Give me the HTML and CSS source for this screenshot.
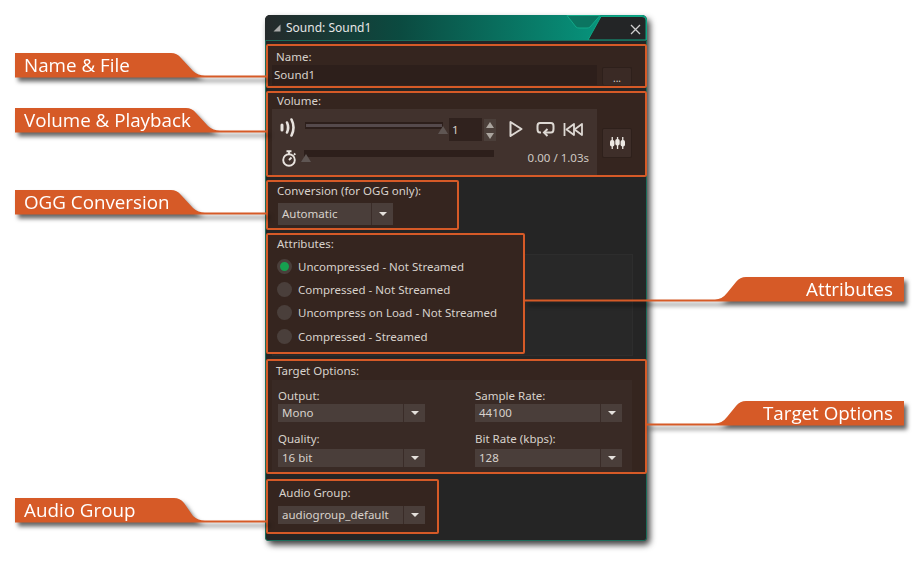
FILE: index.html
```html
<!DOCTYPE html>
<html>
<head>
    <title>Sound Editor</title>
    <link rel="stylesheet" href="styles.css">
</head>
<body>
<div class="stage">
    <div class="window">
        <div class="titlebar">
            <svg class="collapse" width="8" height="8" viewBox="0 0 8 8"><path d="M7.500 .5V7.500H.5Z" fill="#a9a9a9"/></svg>
            <span class="title">Sound: Sound1</span>
            <svg class="notch" width="83" height="25" viewBox="0 0 83 25">
                <path d="M3 .5H36L26 12Q25 13 23 13H15Q13 13 12 12Z" fill="#0b7561" stroke="#12a888"/>
                <path d="M37 1.500H78Q82 1.500 82 5V25H24Z" fill="#232526" stroke="#10a583"/>
                <path d="M67 10L76 19M76 10L67 19" stroke="#cfcfcf" stroke-width="1.300" fill="none"/>
            </svg>
        </div>
        <div class="content">
            <section class="box box-name">
                <div class="label">Name:</div>
                <div class="name-row">
                    <div class="text-input">Sound1</div>
                    <div class="btn btn-dots">...</div>
                </div>
            </section>

            <section class="box box-volume">
                <div class="label">Volume:</div>
                <div class="volume-row">
                    <div class="inner volume-inner">
                        <div class="vol-top">
                            <svg class="ico-speaker" width="16" height="19" viewBox="0 0 16 19" fill="none" stroke="#e8e3de" stroke-linecap="round">
                                <path d="M2 7V12" stroke-width="3"/>
                                <path d="M7 4.500Q9.300 9.500 7 14.500" stroke-width="2.600"/>
                                <path d="M11.500 1.500Q15.500 9.500 11.500 17.500" stroke-width="2.600"/>
                            </svg>
                            <div class="track track-volume"><i class="fill"></i><i class="thumb thumb-end"></i></div>
                            <div class="number">1</div>
                            <div class="spin">
                                <span class="spin-btn"><i class="tri-up"></i></span>
                                <span class="spin-btn"><i class="tri-down"></i></span>
                            </div>
                            <svg class="ico-play" width="14" height="18" viewBox="0 0 14 18"><path d="M1.500 2L12.500 9L1.500 16Z" fill="none" stroke="#ddd8d3" stroke-width="2" stroke-linejoin="round"/></svg>
                            <svg class="ico-loop" width="19" height="16" viewBox="0 0 19 16" fill="none" stroke="#ddd8d3" stroke-width="2"><path d="M5 11.500H4Q1.500 11.500 1.500 8V5Q1.500 2 4 2H15Q17.500 2 17.500 5V8Q17.500 11.500 15 11.500H9"/><path d="M11.500 8L8 11.500L11.500 15"/></svg>
                            <svg class="ico-back" width="20" height="15" viewBox="0 0 20 15" fill="none" stroke="#ddd8d3" stroke-width="1.800" stroke-linejoin="round"><path d="M1.500 1V14"/><path d="M11 2L3.500 7.500L11 13Z"/><path d="M19 2L11.500 7.500L19 13Z"/></svg>
                        </div>
                        <div class="vol-bottom">
                            <svg class="ico-timer" width="16" height="17" viewBox="0 0 16 17" fill="none" stroke="#e8e3de" stroke-width="1.900"><circle cx="8" cy="10" r="5.800"/><path d="M5.500 1.200H10.500M8 1.500V4M13 3.500L14.300 4.800M8 10L10.500 7.500"/></svg>
                            <div class="track track-time"><i class="thumb thumb-start"></i></div>
                            <div class="time">0.00 / 1.03s</div>
                        </div>
                    </div>
                    <div class="btn btn-mixer">
                        <svg width="15" height="12" viewBox="0 0 15 12" fill="#ece8e3">
                            <rect x="1.600" y="0" width="1.300" height="12"/><rect x="6.900" y="0" width="1.300" height="12"/><rect x="12.100" y="0" width="1.300" height="12"/>
                            <rect x="0" y="3" width="4.400" height="6.500" rx="1.800"/><rect x="5.300" y="2" width="4.400" height="6.500" rx="1.800"/><rect x="10.600" y="3" width="4.400" height="6.500" rx="1.800"/>
                        </svg>
                    </div>
                </div>
            </section>

            <section class="box box-conversion">
                <div class="label">Conversion (for OGG only):</div>
                <div class="select select-conv"><span class="value">Automatic</span><span class="arrow"><i class="tri-down"></i></span></div>
            </section>

            <div class="attr-wrap">
                <div class="inner attr-back"></div>
                <section class="box box-attributes">
                    <div class="label">Attributes:</div>
                    <div class="radio radio-first"><i class="dot on"></i>Uncompressed - Not Streamed</div>
                    <div class="radio"><i class="dot"></i>Compressed - Not Streamed</div>
                    <div class="radio"><i class="dot"></i>Uncompress on Load - Not Streamed</div>
                    <div class="radio"><i class="dot"></i>Compressed - Streamed</div>
                </section>
            </div>

            <section class="box box-target">
                <div class="label">Target Options:</div>
                <div class="inner target-inner">
                    <div class="field">
                        <div class="field-label">Output:</div>
                        <div class="select"><span class="value">Mono</span><span class="arrow"><i class="tri-down"></i></span></div>
                    </div>
                    <div class="field">
                        <div class="field-label">Sample Rate:</div>
                        <div class="select"><span class="value">44100</span><span class="arrow"><i class="tri-down"></i></span></div>
                    </div>
                    <div class="field field-low">
                        <div class="field-label">Quality:</div>
                        <div class="select"><span class="value">16 bit</span><span class="arrow"><i class="tri-down"></i></span></div>
                    </div>
                    <div class="field field-low">
                        <div class="field-label">Bit Rate (kbps):</div>
                        <div class="select"><span class="value">128</span><span class="arrow"><i class="tri-down"></i></span></div>
                    </div>
                </div>
            </section>

            <section class="box box-audio">
                <div class="label">Audio Group:</div>
                <div class="select"><span class="value">audiogroup_default</span><span class="arrow"><i class="tri-down"></i></span></div>
            </section>
        </div>
    </div>

    <!-- callouts -->
    <div class="callout c-name">
        <svg width="252" height="25" viewBox="0 0 252 25"><path d="M0 0H156Q162 0 166 5L178 18Q183 22.500 190 22.500H252V24.500H0Z" fill="#d65a27"/></svg>
        <span>Name &amp; File</span>
    </div>
    <div class="callout c-volume">
        <svg width="252" height="25" viewBox="0 0 252 25"><path d="M0 0H171Q177 0 181 5L193 18Q198 22.500 205 22.500H252V24.500H0Z" fill="#d65a27"/></svg>
        <span>Volume &amp; Playback</span>
    </div>
    <div class="callout c-ogg">
        <svg width="252" height="25" viewBox="0 0 252 25"><path d="M0 0H156Q162 0 166 5L178 18Q183 22.500 190 22.500H252V24.500H0Z" fill="#d65a27"/></svg>
        <span>OGG Conversion</span>
    </div>
    <div class="callout c-audio">
        <svg width="252" height="25" viewBox="0 0 252 25"><path d="M0 0H159Q165 0 169 5L178 18Q183 22.500 190 22.500H252V24.500H0Z" fill="#d65a27"/></svg>
        <span>Audio Group</span>
    </div>
    <div class="callout callout-right c-attr">
        <svg width="379" height="25" viewBox="0 0 379 25"><path d="M379 0H221Q215 0 211 5L202 16Q197 22.500 190 22.500H0V24.500H379Z" fill="#d65a27"/></svg>
        <span>Attributes</span>
    </div>
    <div class="callout callout-right c-target">
        <svg width="258" height="25" viewBox="0 0 258 25"><path d="M258 0H100Q94 0 90 5L81 16Q76 22.500 69 22.500H0V24.500H258Z" fill="#d65a27"/></svg>
        <span>Target Options</span>
    </div>
</div>
</body>
</html>
```

FILE: styles.css
```css
* {
    box-sizing: border-box;
}
body {
    margin: 0;
    background-color: #ffffff;
    font-family: "Noto Sans", "Open Sans", sans-serif;
    font-size: 11.5px;
    color: #d8d2cc;
}
.stage {
    position: relative;
    width: 923px;
    height: 566px;
    padding: 15px 0 0 265px;
    overflow: hidden;
}

/* window */
.window {
    width: 382px;
    height: 526px;
    border-radius: 5px;
    background-color: #252525;
    box-shadow: 3px 4px 6px rgba(0, 0, 0, 0.75);
}
.titlebar {
    position: relative;
    display: flex;
    align-items: center;
    height: 25px;
    padding-left: 8px;
    border-radius: 5px 5px 0 0;
    background: linear-gradient(90deg, #252a2b 0%, #0b4a40 35%, #079079 85%, #0aa586 100%);
}
.collapse {
    margin-right: 5px;
}
.title {
    font-size: 12px;
    color: #e6e6e6;
}
.notch {
    position: absolute;
    right: 0;
    top: 0;
}
.content {
    height: 501px;
    padding: 3px 0 0 0;
    border: 1px solid #1b6d5a;
    border-radius: 0 0 3px 3px;
    background-color: #252525;
}

/* orange outlined groups */
.box {
    margin-right: -1px;
    border: 2px solid #d65a27;
    border-radius: 2px;
    background-color: #35251f;
}
.label {
    padding-left: 8px;
    line-height: 16px;
}
.inner {
    background-color: #41322d;
}
.box-name {
    height: 44px;
    padding-top: 3px;
    margin-bottom: 3px;
}
.name-row {
    display: flex;
    padding-left: 4px;
}
.text-input {
    width: 325px;
    height: 20px;
    padding-left: 2px;
    line-height: 19px;
    background-color: #2d1f1b;
}
.btn {
    display: flex;
    align-items: center;
    justify-content: center;
    width: 30px;
    border: 1px solid #2e201b;
    border-radius: 2px;
    background-color: #3a2a25;
}
.btn-dots {
    height: 18px;
    margin: 2px 0 0 5px;
    padding-top: 3px;
    border-bottom: 0;
    font-size: 10px;
}

.box-volume {
    height: 86px;
    margin-bottom: 3px;
}
.box-volume .label,
.box-conversion .label,
.box-attributes .label {
    padding-left: 9px;
}
.volume-row {
    display: flex;
    padding-left: 4px;
}
.volume-inner {
    width: 325px;
    height: 66px;
    padding: 8px 0 0 8px;
}
.btn-mixer {
    width: 30px;
    height: 30px;
    margin: 19px 0 0 5px;
    background-color: #3e2e29;
}
.vol-top {
    display: flex;
    align-items: flex-start;
}
.ico-speaker {
    margin: 1px 9px 0 0;
}
.track {
    position: relative;
    height: 7px;
    background-color: #2d1f1b;
}
.track-volume {
    width: 138px;
    margin-top: 5px;
    padding: 2px 1px;
}
.fill {
    display: block;
    height: 3px;
    background-color: #554a4c;
}
.thumb {
    position: absolute;
    top: 4px;
    width: 0;
    height: 0;
    border-left: 5.500px solid transparent;
    border-right: 5.500px solid transparent;
    border-bottom: 8px solid #5f5653;
}
.thumb-end {
    right: -5px;
}
.thumb-start {
    left: -3px;
}
.number {
    width: 33px;
    height: 23px;
    margin: 1px 0 0 6px;
    padding-left: 3px;
    line-height: 23px;
    background-color: #30221e;
}
.spin {
    display: flex;
    flex-direction: column;
    width: 12px;
    margin: 2px 13px 0 2px;
}
.spin-btn {
    display: flex;
    align-items: center;
    justify-content: center;
    height: 11px;
    background-color: #4b3f3a;
}
.tri-up,
.tri-down {
    display: block;
    width: 0;
    height: 0;
    border-left: 4px solid transparent;
    border-right: 4px solid transparent;
}
.tri-up {
    border-bottom: 6px solid #aaa49e;
}
.tri-down {
    border-top: 4px solid #e4e0dc;
}
.spin .tri-down {
    border-top: 6px solid #aaa49e;
}
.ico-play {
    margin: 3px 13px 0 0;
}
.ico-loop {
    margin: 4px 8px 0 0;
}
.ico-back {
    margin-top: 5px;
}
.vol-bottom {
    display: flex;
    align-items: flex-start;
    margin-top: 9px;
}
.ico-timer {
    margin: 0 7px 0 1px;
}
.track-time {
    width: 190px;
}
.time {
    width: 95px;
    text-align: right;
    line-height: 16px;
    color: #cfc9c3;
}

.box-conversion {
    width: 193px;
    height: 50px;
    margin-bottom: 3px;
    padding-top: 1px;
}
.select {
    display: flex;
    width: 147px;
    height: 18px;
    margin-left: 10px;
    line-height: 18px;
    background-color: #4a3e3a;
}
.value {
    flex: 1;
    padding-left: 4px;
}
.arrow {
    display: flex;
    align-items: center;
    justify-content: center;
    width: 22px;
    margin-left: 1px;
    border-left: 1px solid #3a2c28;
}
.select-conv {
    width: 115px;
    height: 22px;
    margin-top: 4px;
    line-height: 22px;
}

.attr-wrap {
    position: relative;
    margin-bottom: 5px;
}
.attr-back {
    position: absolute;
    left: 6px;
    top: 21px;
    width: 361px;
    height: 102px;
    border: 1px solid #2d2d2d;
    background-color: #282828;
}
.box-attributes {
    position: relative;
    width: 259px;
    height: 121px;
    padding-top: 1px;
}
.radio {
    display: flex;
    align-items: center;
    height: 23.300px;
    padding-left: 9px;
}
.radio-first {
    margin-top: 2px;
    height: 24px;
}
.dot {
    display: block;
    width: 15px;
    height: 15px;
    margin-right: 6px;
    border-radius: 50%;
    background-color: #4a3f3b;
}
.dot.on {
    border: 3px solid #4a3f3b;
    background-color: #16a050;
}

.box-target {
    height: 115px;
    margin-bottom: 5px;
    padding-top: 2px;
}
.target-inner {
    display: grid;
    grid-template-columns: 197px 147px;
    grid-auto-rows: 43px;
    width: 360px;
    height: 92px;
    margin: 1px 0 0 4px;
    padding: 8px 0 0 6px;
    background-color: #392a25;
}
.field-label {
    line-height: 16px;
}
.field-low .field-label {
    padding-bottom: 2px;
    height: 18px;
}
.field .select {
    margin-left: 0;
}

.box-audio {
    width: 173px;
    height: 55px;
    padding-top: 4px;
}
.box-audio .label {
    padding-left: 11px;
}
.box-audio .select {
    margin-top: 5px;
}

/* callouts */
.callout {
    position: absolute;
    filter: drop-shadow(3px 4px 2px rgba(0, 0, 0, 0.6));
}
.callout svg {
    display: block;
}
.callout span {
    position: absolute;
    left: 9px;
    top: 0;
    font-family: "Open Sans", sans-serif;
    font-size: 18.800px;
    line-height: 25px;
    color: #ffffff;
    white-space: nowrap;
}
.callout-right span {
    left: auto;
    right: 11px;
}
.c-name {
    left: 15px;
    top: 53px;
}
.c-volume {
    left: 15px;
    top: 108px;
}
.c-ogg {
    left: 15px;
    top: 190px;
}
.c-audio {
    left: 15px;
    top: 498px;
}
.c-attr {
    left: 525px;
    top: 277px;
}
.c-target {
    left: 646px;
    top: 401px;
}
```
